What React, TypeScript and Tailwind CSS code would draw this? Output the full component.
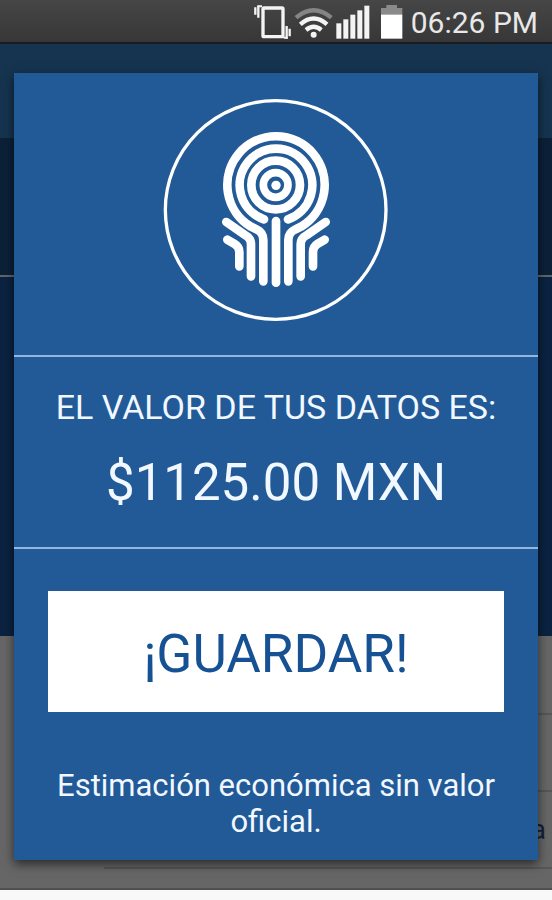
import { ReactNode } from "react";

function VibrateIcon() {
  return (
    <svg viewBox="36 0 117 129" className="h-[43px] w-[39px]" aria-hidden="true">
      <rect x="66" y="24" width="60" height="86" rx="3" fill="none" stroke="#f4f4f4" strokeWidth="10" />
      <path d="M43 22v22M52 17v36M137 78v38M146 86v23" stroke="#f4f4f4" strokeWidth="7" fill="none" />
      <path d="M49 19h14M128 113h12" stroke="#f4f4f4" strokeWidth="6" />
    </svg>
  );
}

function WifiIcon() {
  return (
    <svg viewBox="160 0 117 129" className="h-[43px] w-[39px]" aria-hidden="true">
      <g fill="none" strokeWidth="13">
        <path d="M166 53Q219 9 272 53" stroke="#858585" />
        <path d="M179 73Q219 38 259 73" stroke="#f4f4f4" />
        <path d="M196 90Q219 71 242 90" stroke="#f4f4f4" />
      </g>
      <circle cx="219" cy="104" r="9" fill="#f4f4f4" />
    </svg>
  );
}

function SignalIcon() {
  return (
    <svg viewBox="286 0 108 129" className="h-[43px] w-[36px]" aria-hidden="true">
      <g fill="#f4f4f4">
        <rect x="290" y="70" width="15" height="46" />
        <rect x="311" y="58" width="15" height="58" />
        <rect x="332" y="44" width="15" height="72" />
        <rect x="353" y="31" width="15" height="85" />
        <rect x="374" y="17" width="15" height="99" />
      </g>
    </svg>
  );
}

function BatteryIcon() {
  return (
    <svg viewBox="420 0 78 129" className="h-[43px] w-[26px]" aria-hidden="true">
      <path d="M426 45V24h16v-9h32v9h16v21z" fill="#8a8a8a" />
      <rect x="426" y="44" width="64" height="72" fill="#fff" />
    </svg>
  );
}

function StatusBar() {
  return (
    <header className="flex h-11 items-center justify-end border-b-2 border-[#181c20] bg-linear-to-b from-[#464646] to-[#373737] pr-3.5 text-[#e8e8e8]">
      <div className="flex items-center gap-0.5">
        <VibrateIcon />
        <WifiIcon />
        <SignalIcon />
      </div>
      <div className="ml-2">
        <BatteryIcon />
      </div>
      <time className="ml-1.5 pt-1 text-[30px] leading-8">06:26 PM</time>
    </header>
  );
}

function Logo() {
  return (
    <svg viewBox="3 0 720 720" className="size-60" role="img" aria-label="Logo">
      <g fill="none" stroke="#fff" strokeWidth="26" strokeLinecap="round" strokeLinejoin="round">
        <ellipse cx="362" cy="360" rx="331" ry="328" strokeWidth="10" />
        <circle cx="362" cy="285" r="73" />
        <circle cx="362" cy="285" r="37" strokeWidth="23" />
        <path d="M327 388A109 109 0 1 1 399 388" />
        <path d="M325 574V450Q325 428 306 419L288 410A146 146 0 1 1 438 410L420 419Q400 428 400 450V574" />
        <path d="M363 393V578" />
        <path d="M214 396L270 435Q288 445 288 462V559M512 396L456 435Q437 445 437 462V559" />
        <path d="M217 449L239 462Q253 470 253 486V529M509 449L487 462Q474 470 474 486V529" />
      </g>
      <circle cx="363" cy="286" r="14" fill="#fff" />
    </svg>
  );
}

function Row({ children }: { children?: ReactNode }) {
  return (
    <li className="ml-[104px] flex h-[77px] items-center justify-end border-b-2 border-[#565656] pr-1.5 text-[28px] text-[#10243c]">
      {children}
    </li>
  );
}

// Dimmed screen behind the dialog
function Backdrop() {
  return (
    <div className="col-start-1 row-start-1 flex flex-col bg-[#0b2340]">
      <div className="h-[94px] bg-[#16344f]" />
      <div className="h-[137px] bg-[#0c2138]" />
      <div className="h-0.5 bg-[#5f666d]" />
      <div className="flex-1" />
      <ul className="h-[254px] border-b-2 border-[#505050] bg-[#666] pt-0.5">
        <Row />
        <Row />
        <Row>a</Row>
      </ul>
    </div>
  );
}

function Dialog() {
  return (
    <section
      role="dialog"
      aria-labelledby="value-title"
      className="z-10 col-start-1 row-start-1 mx-3.5 mt-[29px] mb-[30px] flex flex-col divide-y-2 divide-[#8fb8dc] bg-[#225a98] text-center text-[#f2f8ff] shadow-[0_4px_10px_rgba(0,0,0,0.6)]"
    >
      <div className="flex justify-center pt-[17px] pb-[25px]">
        <Logo />
      </div>
      <div className="flex flex-col gap-5 pt-[30px] pb-7">
        <h1 id="value-title" className="text-[34px] leading-10">
          EL VALOR DE TUS DATOS ES:
        </h1>
        <p className="text-[51px] leading-[72px]">$1125.00 MXN</p>
      </div>
      <div className="flex flex-col px-[34px] pt-[42px] pb-5">
        <button
          type="button"
          className="h-[121px] bg-white pt-1.5 text-[53px] text-[#165193]"
        >
          ¡GUARDAR!
        </button>
        <p className="mt-14 text-[31px] leading-9">
          Estimación económica sin valor oficial.
        </p>
      </div>
    </section>
  );
}

export default function App() {
  return (
    <div className="min-h-screen bg-[#f8f8f8] font-['Roboto',sans-serif]">
      <StatusBar />
      <main className="grid">
        <Backdrop />
        <Dialog />
      </main>
    </div>
  );
}
